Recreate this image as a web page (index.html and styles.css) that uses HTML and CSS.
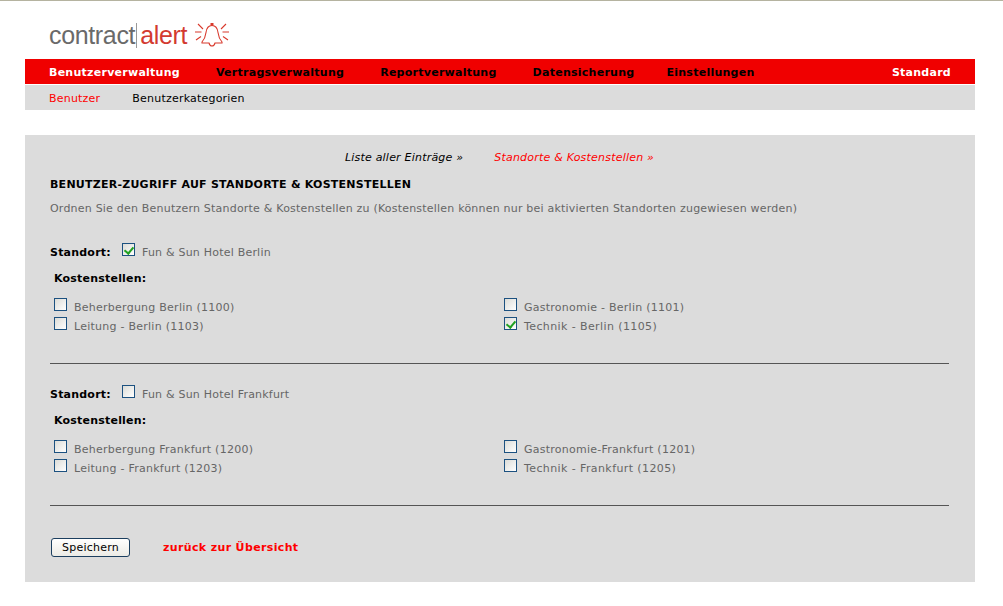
FILE: index.html
```html
<!DOCTYPE html>
<html lang="de">
<head>
<meta charset="utf-8">
<title>contract|alert</title>
<link rel="stylesheet" href="styles.css">
</head>
<body>
<header class="logo">
  <span class="logo-text"><span class="logo-a">contract</span><span class="logo-sep"></span><span class="logo-b">alert</span></span>
  <svg class="bell" width="36" height="26" viewBox="0 0 36 26" fill="none" stroke="#d8392c" stroke-width="1.1">
    <path d="M18 3.500c-4 0-5.500 3-6 7-.4 3.500-1.400 6.500-4 9.500v1h7c.5 2 1.500 3 3 3s2.500-1 3-3h7v-1c-2.600-3-3.600-6-4-9.500-.5-4-2-7-6-7z"/>
    <path d="M18 1v2.500" stroke-width="3"/>
    <path d="M1 10h6.500M2 18l5-3.500M4 2l5 5M35 10h-6.500M34 18l-5-3.500M32 2l-5 5"/>
  </svg>
</header>
<nav class="mainnav">
  <a class="main-item on">Benutzerverwaltung</a>
  <a class="main-item">Vertragsverwaltung</a>
  <a class="main-item">Reportverwaltung</a>
  <a class="main-item">Datensicherung</a>
  <a class="main-item tight">Einstellungen</a>
  <a class="main-item on std">Standard</a>
</nav>
<nav class="subnav">
  <a class="red">Benutzer</a>
  <a>Benutzerkategorien</a>
</nav>
<main class="panel">
  <div class="crumbs">
    <a>Liste aller Einträge »</a>
    <a class="red">Standorte &amp; Kostenstellen »</a>
  </div>
  <h1>BENUTZER-ZUGRIFF AUF STANDORTE &amp; KOSTENSTELLEN</h1>
  <p class="intro">Ordnen Sie den Benutzern Standorte &amp; Kostenstellen zu (Kostenstellen können nur bei aktivierten Standorten zugewiesen werden)</p>

  <section class="site first">
    <div class="site-row"><b>Standort:</b><span class="cb checked"></span><span class="lbl">Fun &amp; Sun Hotel Berlin</span></div>
    <h2>Kostenstellen:</h2>
    <div class="grid">
      <div class="cell"><span class="cb"></span><span class="lbl">Beherbergung Berlin (1100)</span></div>
      <div class="cell"><span class="cb"></span><span class="lbl">Gastronomie - Berlin (1101)</span></div>
      <div class="cell"><span class="cb"></span><span class="lbl">Leitung - Berlin (1103)</span></div>
      <div class="cell"><span class="cb checked"></span><span class="lbl wide">Technik - Berlin (1105)</span></div>
    </div>
  </section>

  <section class="site">
    <div class="site-row"><b>Standort:</b><span class="cb"></span><span class="lbl">Fun &amp; Sun Hotel Frankfurt</span></div>
    <h2>Kostenstellen:</h2>
    <div class="grid">
      <div class="cell"><span class="cb"></span><span class="lbl">Beherbergung Frankfurt (1200)</span></div>
      <div class="cell"><span class="cb"></span><span class="lbl">Gastronomie-Frankfurt (1201)</span></div>
      <div class="cell"><span class="cb"></span><span class="lbl">Leitung - Frankfurt (1203)</span></div>
      <div class="cell"><span class="cb"></span><span class="lbl wide">Technik - Frankfurt (1205)</span></div>
    </div>
  </section>

  <div class="actions">
    <button class="save" type="button">Speichern</button>
    <a class="back">zurück zur Übersicht</a>
  </div>
</main>
</body>
</html>
```
FILE: styles.css
```css
* { box-sizing: border-box; }
html, body { margin: 0; padding: 0; background: #fff; }
body {
  width: 1003px;
  height: 606px;
  overflow: hidden;
  border-top: 1px solid #b5b3a0;
  font: 11px/13px "DejaVu Sans", Verdana, sans-serif;
  letter-spacing: 0.21px;
  color: #000;
}
.logo { height: 58px; padding: 19px 0 0 49px; display: flex; align-items: flex-start; gap: 7px; }
.logo-text { font: 25px/30px "Liberation Sans", Arial, sans-serif; letter-spacing: -0.35px; display: flex; }
.logo-a { color: #6a6a6a; }
.logo-b { color: #d33a30; }
.logo-sep { width: 1px; height: 25px; margin: 3px 3px 0 1px; background: #999; }
.bell { margin-top: 2px; }
.mainnav {
  height: 25px;
  margin: 0 28px 0 25px;
  padding: 1px 24px 0;
  background: #f00000;
  display: flex;
  align-items: center;
  gap: 36px;
  font-weight: bold;
  letter-spacing: 0.26px;
}
.main-item { color: #000; }
.main-item.on { color: #fff; }
.tight { margin-left: -4px; }
.std { margin-left: auto; }
.subnav {
  margin: 1px 28px 0 25px;
  padding: 1px 24px 0;
  height: 25px;
  background: #dcdcdc;
  display: flex;
  align-items: center;
  gap: 32px;
}
.red { color: #f00; }
.panel {
  margin: 25px 28px 0 25px;
  height: 447px;
  background: #dcdcdc;
  padding: 16px 26px 0 25px;
}
.crumbs { display: flex; justify-content: center; gap: 31px; font-style: italic; height: 13px; }
h1 { margin: 14px 0 0; font-size: 11px; line-height: 13px; font-weight: bold; letter-spacing: 0.24px; }
.intro { margin: 11px 0 0; color: #666; }
.site { height: 142px; padding-top: 23px; border-bottom: 1px solid #555; }
.first { height: 149px; padding-top: 30px; }
.site-row { display: flex; align-items: center; height: 15px; }
.site-row b { width: 72px; }
.lbl { color: #666; }
.cell .lbl { letter-spacing: 0.25px; }
.cell .wide { letter-spacing: 0.4px; }
.cb {
  flex: none;
  width: 13px;
  height: 13px;
  border: 1px solid #1c5180;
  background: linear-gradient(135deg, #dcdcd7, #fff);
  position: relative;
  top: -3px;
}
.site-row .lbl { margin-left: 7px; }
.checked::after {
  content: "";
  position: absolute;
  left: 3px;
  top: 1px;
  width: 4px;
  height: 7px;
  border: solid #21a121;
  border-width: 0 2px 2px 0;
  transform: rotate(40deg);
}
h2 { margin: 12px 0 0 4px; font-size: 11px; line-height: 13px; font-weight: bold; }
.grid { margin: 16px 0 0 4px; display: grid; grid-template-columns: 450px 1fr; row-gap: 6px; }
.cell { display: flex; align-items: center; height: 13px; gap: 7px; }
.actions { margin-top: 32px; display: flex; align-items: center; gap: 33px; }
.save {
  width: 79px;
  height: 19px;
  margin-left: 1px;
  padding: 0;
  border: 1px solid #1c3f5f;
  border-radius: 3px;
  background: linear-gradient(#fff, #ecebe5);
  font: 11px "DejaVu Sans", Verdana, sans-serif;
  letter-spacing: 0.21px;
  color: #000;
}
.back { color: #f00; font-weight: bold; letter-spacing: 0.36px; }
```
